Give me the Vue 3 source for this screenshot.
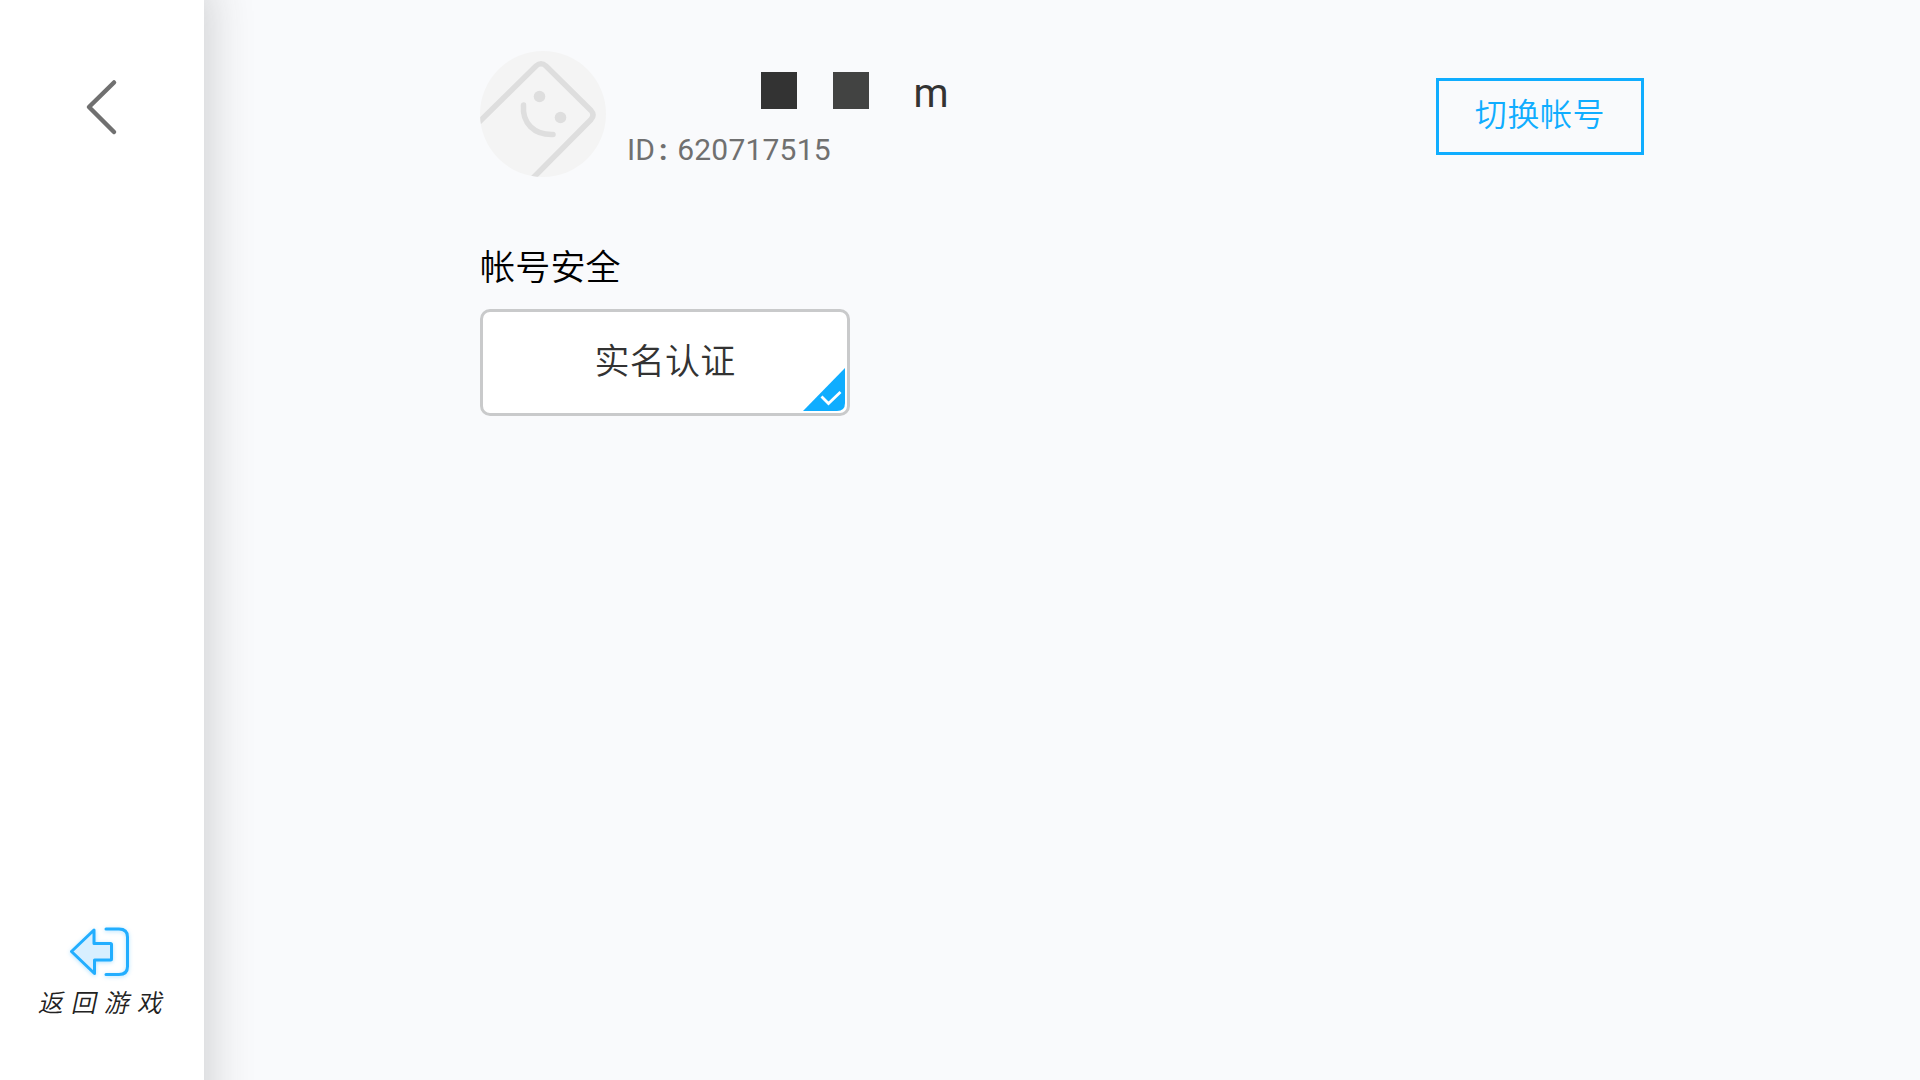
<template>
  <div class="page">
    <aside class="sidebar">
      <button class="back" @click="$emit('back')">
        <svg width="36" height="60" viewBox="0 0 36 60">
          <path d="M30 5.5 L5 30 L30 55" />
        </svg>
      </button>

      <button class="return-game" @click="$emit('return-game')">
        <svg class="return-icon" width="72" height="60" viewBox="0 0 72 60">
          <path
            class="arrow"
            d="M7.5 30.5 L30 9 V22.5 H46.5 Q47.5 22.5 47.5 23.5 V38 Q47.5 39 46.5 39 H30.5 V52.5 Z"
          />
          <path class="door" d="M42 8 H55 Q63.500 8 63.500 16 V45.500 Q63.500 53.500 55 53.500 H42" />
        </svg>
        <span class="return-label">返回游戏</span>
      </button>
    </aside>

    <main class="content">
      <header class="profile">
        <svg class="avatar" width="126" height="126" viewBox="0 0 126 126">
          <defs>
            <clipPath id="avatar-clip"><circle cx="63" cy="63" r="63" /></clipPath>
          </defs>
          <g clip-path="url(#avatar-clip)">
            <rect width="126" height="126" fill="#f4f4f4" />
            <path
              class="line"
              d="M-3 73 L56 15 Q61 10.500 66 15 L111 59.500 Q115 64 111 68.500 L51 129"
            />
            <path class="line" d="M43.500 54 C42 72 54 84 73 83.500" />
            <circle cx="59.500" cy="45.500" r="5.800" fill="#dedede" />
            <circle cx="80.500" cy="66.500" r="5.800" fill="#dedede" />
          </g>
        </svg>

        <div class="info">
          <div class="name">
            <span class="block"></span>
            <span class="block light"></span>
            <span class="letter">m</span>
          </div>
          <div class="user-id">
            <span>ID</span><span class="colon">:</span><span>{{ user.id }}</span>
          </div>
        </div>

        <button class="switch" @click="$emit('switch')">切换帐号</button>
      </header>

      <section class="security">
        <h2 class="title">帐号安全</h2>
        <div v-for="item in items" :key="item.label" class="card">
          {{ item.label }}
          <svg v-if="item.done" class="badge" width="42" height="43" viewBox="0 0 42 43">
            <path d="M42 0 V35 Q42 43 34 43 H0 Z" fill="#0fadff" />
            <path class="check" d="M18.500 28.500 L25.500 35.500 L37.500 24" />
          </svg>
        </div>
      </section>
    </main>
  </div>
</template>

<script setup>
defineEmits(["back", "return-game", "switch"]);

const user = { id: "620717515" };

const items = [{ label: "实名认证", done: true }];
</script>

<style>
body {
  margin: 0;
  overflow: hidden;
}
</style>

<style scoped>
.page {
  display: flex;
  width: 100vw;
  height: 100vh;
  overflow: hidden;
  background: #f9fafc;
  font-family: Roboto, "Noto Sans CJK SC", sans-serif;
}

button {
  padding: 0;
  border: none;
  background: none;
  font-family: inherit;
  cursor: pointer;
}

svg {
  display: block;
  fill: none;
}

/* runs past the page edges so the shadow stays even down to the bottom */
.sidebar {
  display: flex;
  flex-direction: column;
  justify-content: space-between;
  align-items: center;
  box-sizing: border-box;
  flex: 0 0 204px;
  margin: -10px 0 -50px;
  padding: 87px 0 110px;
  background: #fff;
  box-shadow: 0 0 42px 6px rgba(45, 45, 45, 0.2);
  z-index: 1;
}

.back path {
  stroke: #707070;
  stroke-width: 4.5;
  stroke-linecap: round;
  stroke-linejoin: round;
}

.return-game {
  display: flex;
  flex-direction: column;
  align-items: center;
}

.return-icon {
  margin-left: -3px;
  filter: drop-shadow(0 1px 2px rgba(34, 174, 255, 0.35));
}

.return-icon path {
  stroke: #22aeff;
  stroke-width: 3;
  stroke-linecap: round;
  stroke-linejoin: round;
}

.return-icon .arrow {
  fill: #d8efff;
}

.return-label {
  margin-top: 1px;
  font-family: "Noto Sans CJK SC", sans-serif;
  font-size: 25px;
  font-weight: 350;
  line-height: 38px;
  letter-spacing: 8px;
  margin-right: -8px;
  color: #222;
  transform: skewX(-12deg);
}

.content {
  flex: 1;
  padding: 51px 276px 0;
}

.profile {
  display: flex;
  align-items: flex-start;
}

.avatar .line {
  stroke: #dedede;
  stroke-width: 5.5;
  stroke-linecap: round;
}

.info {
  flex: 1;
  padding: 21px 0 0 20px;
}

.name {
  display: flex;
  height: 37px;
  padding-left: 135px;
}

.block {
  width: 36px;
  margin-right: 36px;
  background: #333;
}

.block.light {
  background: #424342;
}

.letter {
  margin-left: 8.5px;
  font-size: 40px;
  line-height: 43px;
  color: #333;
}

.user-id {
  display: flex;
  margin-top: 22px;
  padding-left: 1px;
  font-size: 30px;
  line-height: 38px;
  letter-spacing: 0.2px;
  color: #707070;
}

.colon {
  width: 16px;
  padding-right: 6px;
  text-align: center;
  font-weight: 700;
}

.switch {
  width: 208px;
  height: 77px;
  margin-top: 27px;
  padding-bottom: 9px;
  box-sizing: border-box;
  border: 3px solid #0fadff;
  font-size: 32px;
  font-weight: 350;
  letter-spacing: 0.6px;
  color: #0fadff;
}

.title {
  margin: 67px 0 0;
  font-size: 35px;
  font-weight: 350;
  line-height: 50px;
  letter-spacing: 0.2px;
  color: #000;
}

.card {
  position: relative;
  width: 370px;
  height: 107px;
  margin-top: 15px;
  box-sizing: border-box;
  border: 3px solid #c9cacb;
  border-radius: 10px;
  background: #fff;
  font-size: 35px;
  font-weight: 350;
  line-height: 102px;
  letter-spacing: 0.3px;
  text-align: center;
  color: #333;
}

.badge {
  position: absolute;
  right: 2px;
  bottom: 2px;
}

.check {
  stroke: #fff;
  stroke-width: 2.8;
}
</style>
